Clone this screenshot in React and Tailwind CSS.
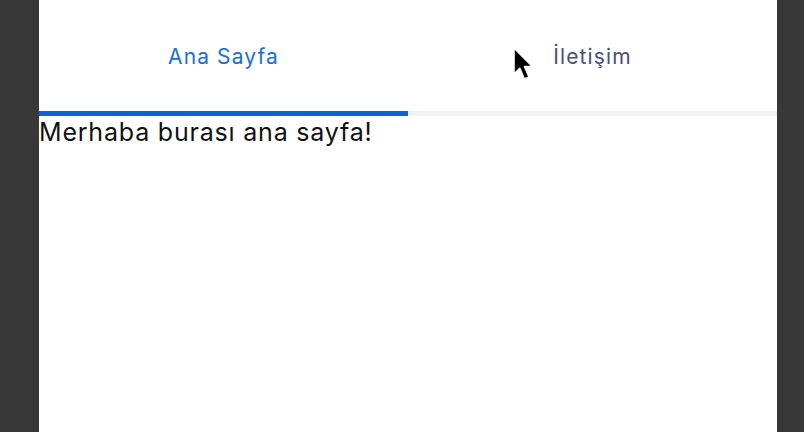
export default function App() {
  return (
    <div className="relative flex h-[432px] w-[804px] overflow-hidden bg-[#3a3a3a]" style={{ fontFamily: 'Inter, "Liberation Sans", Arial, sans-serif' }}>
      <div className="w-[39px] shrink-0 bg-[#383838]" />
      <div className="flex w-[738px] shrink-0 flex-col bg-white">
        <div className="flex h-[111px] w-full">
          <div className="flex w-[369px] items-center justify-center pt-[2px] text-[21px] tracking-[1.1px] text-[#1a6fd4]">Ana Sayfa</div>
          <div className="flex w-[369px] items-center justify-center pt-[2px] text-[21px] tracking-[1.1px] text-[#4a5078]">İletişim</div>
        </div>
        <div className="flex h-[5px] w-full bg-[#f2f2f2]">
          <div className="h-full w-[369px] bg-[#0b62d6]" />
        </div>
        <div className="mt-[1px] text-[25px] leading-[30px] tracking-[0.8px] text-[#111]">Merhaba burası ana sayfa!</div>
      </div>
      <div className="flex-1 bg-[#383838]" />
      <svg className="absolute left-[512px] top-[46px]" width="24" height="37" viewBox="0 0 24 37">
        <path d="M2 2 L2 28 L7.8 22.3 L12.4 33 L17 31 L12.6 20.6 L20.6 20.6 Z" fill="#000" stroke="#fff" strokeWidth="1.6" strokeLinejoin="round" />
      </svg>
    </div>
  );
}
